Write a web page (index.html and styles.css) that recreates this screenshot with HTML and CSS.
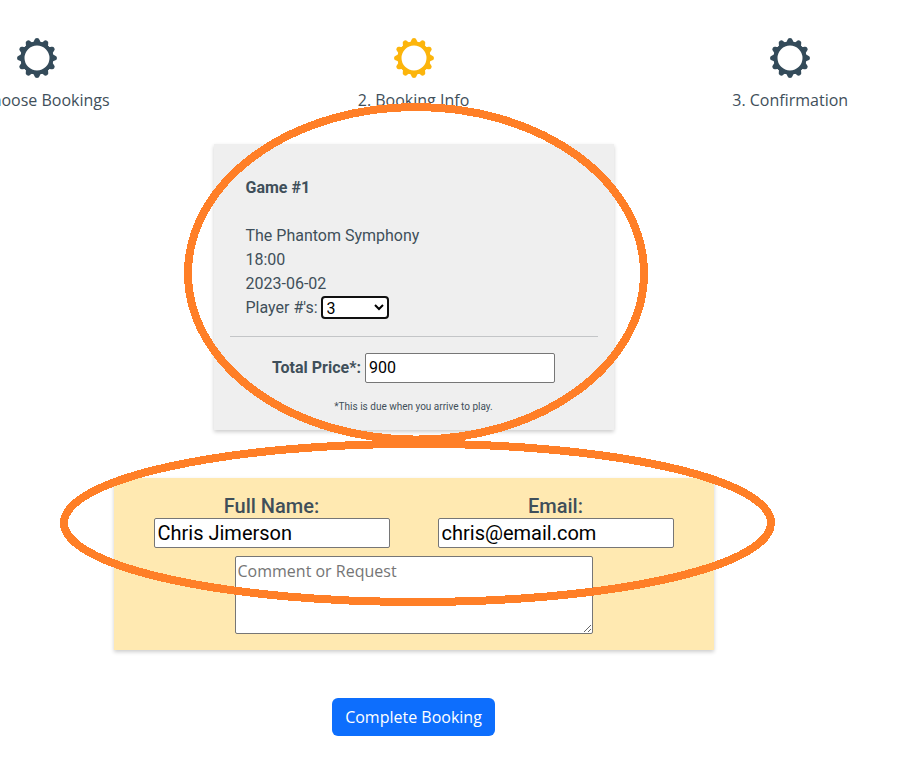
FILE: index.html
```
<!DOCTYPE html>
<html lang="en">
<head>
<meta charset="utf-8">
<title>Booking Info</title>
<link rel="stylesheet" href="styles.css">
</head>
<body>
<svg class="defs" aria-hidden="true">
  <symbol id="gear" viewBox="-20 -20 40 40">
    <circle r="14.5" fill="none" stroke="currentColor" stroke-width="4"/>
    <path id="tooth" fill="currentColor" d="M-5-15Q-3.1-15.6-2.6-17.9Q-2.1-20 0-20Q2.1-20 2.6-17.9Q3.1-15.6 5-15Z"/>
    <use href="#tooth" transform="rotate(30)"/>
    <use href="#tooth" transform="rotate(60)"/>
    <use href="#tooth" transform="rotate(90)"/>
    <use href="#tooth" transform="rotate(120)"/>
    <use href="#tooth" transform="rotate(150)"/>
    <use href="#tooth" transform="rotate(180)"/>
    <use href="#tooth" transform="rotate(210)"/>
    <use href="#tooth" transform="rotate(240)"/>
    <use href="#tooth" transform="rotate(270)"/>
    <use href="#tooth" transform="rotate(300)"/>
    <use href="#tooth" transform="rotate(330)"/>
  </symbol>
</svg>
<main class="page">
  <div class="steps">
    <div class="step"><svg class="gear"><use href="#gear"/></svg><span>1. Choose Bookings</span></div>
    <div class="step step-active"><svg class="gear"><use href="#gear"/></svg><span>2. Booking Info</span></div>
    <div class="step"><svg class="gear"><use href="#gear"/></svg><span>3. Confirmation</span></div>
  </div>
  <section class="card game">
    <div class="game-details">
      <b class="game-title">Game #1</b>
      <div>The Phantom Symphony</div>
      <div>18:00</div>
      <div>2023-06-02</div>
      <div class="players"><label for="players">Player #'s:</label><select id="players"><option>3</option></select></div>
    </div>
    <hr>
    <div class="total"><label for="total">Total Price*:</label><input id="total" value="900"></div>
    <p class="note">*This is due when you arrive to play.</p>
  </section>
  <section class="card contact">
    <div class="fields">
      <div class="field"><label for="name">Full Name:</label><input id="name" value="Chris Jimerson"></div>
      <div class="field"><label for="email">Email:</label><input id="email" value="chris@email.com"></div>
    </div>
    <textarea placeholder="Comment or Request"></textarea>
  </section>
  <button class="submit">Complete Booking</button>
</main>
<svg class="marks" viewBox="0 0 897 775" aria-hidden="true">
  <ellipse cx="416" cy="273.3" rx="228" ry="166.3"/>
  <ellipse cx="417.5" cy="522.9" rx="353.5" ry="79.1"/>
</svg>
</body>
</html>
```
FILE: styles.css
```
* { box-sizing: border-box; }
html, body { overflow: hidden; }
body {
  margin: 0;
  height: 775px;
  background: #fff;
  color: #3f4f5a;
  font: 16px/24px "Open Sans", sans-serif;
}
.defs { display: none; }
.page {
  width: 827px;
  padding-top: 38px;
  display: flex;
  flex-direction: column;
  align-items: center;
}
.steps { display: flex; flex: none; width: 1130px; height: 74px; }
.step {
  flex: 1;
  display: flex;
  flex-direction: column;
  align-items: center;
  gap: 10px;
}
.gear { width: 40px; height: 40px; color: #344b5a; }
.step-active .gear { color: #fcb50c; }
.card { font-family: Roboto, sans-serif; box-shadow: 0 2px 4px rgba(0, 0, 0, .2); }
.game {
  width: 400px;
  height: 286px;
  margin-top: 32px;
  padding: 32px 16px 0;
  background: #efefef;
}
.game-details { padding-left: 16px; }
.game-title { display: block; margin-bottom: 24px; }
.players { display: flex; align-items: flex-start; gap: 3px; height: 24px; }
select {
  width: 68px;
  height: 23px;
  border: 2px solid #101010;
  border-radius: 4px;
  background-color: #fff;
  color: #000;
  font: 16px Roboto, sans-serif;
}
hr { margin: 16px 0; border: 0; border-top: 1px solid #c3c5c7; }
.total {
  display: flex;
  justify-content: center;
  align-items: center;
  gap: 4px;
  font-weight: 700;
}
input, textarea {
  display: block;
  border: 1px solid #767676;
  border-radius: 2px;
  background: #fff;
  color: #000;
}
input { height: 30px; padding: 1px 3px; font: 20px Roboto, sans-serif; }
.total input { width: 190px; padding-bottom: 3px; font-size: 16px; }
.note { margin: 12px 0 0; text-align: center; font-size: 10px; }
.contact {
  width: 600px;
  height: 172px;
  margin-top: 48px;
  padding-top: 16px;
  background: #ffe9b1;
}
.fields { display: flex; justify-content: center; gap: 48px; }
.field { width: 236px; text-align: center; font-size: 20px; font-weight: 500; }
.field label { display: block; }
.field input { width: 236px; }
textarea {
  width: 358px;
  height: 78px;
  margin: 8px auto 0;
  padding: 2px;
  font: 16px/24px "Open Sans", sans-serif;
}
.submit {
  width: 163px;
  height: 38px;
  margin-top: 48px;
  padding: 0;
  border: 0;
  border-radius: 6px;
  background: #0d6efd;
  color: #fff;
  font: 16px/24px "Open Sans", sans-serif;
}
.marks {
  position: absolute;
  top: 0;
  left: 0;
  width: 897px;
  height: 775px;
  pointer-events: none;
  fill: none;
  stroke: #ff7f27;
  stroke-width: 8px;
  shape-rendering: crispEdges;
}
```
